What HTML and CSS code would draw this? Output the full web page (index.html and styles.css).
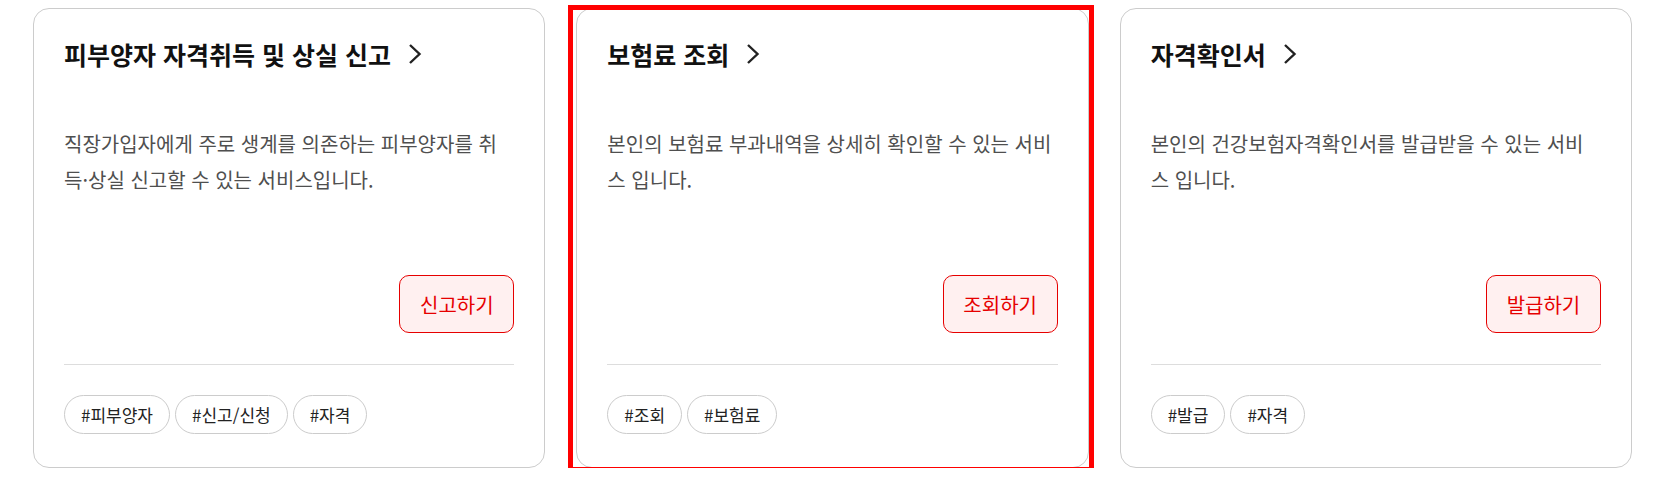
FILE: index.html
```html
<!DOCTYPE html>
<html lang="ko">
<head>
    <meta charset="UTF-8">
    <meta name="viewport" content="width=device-width, initial-scale=1.0">
    <title>자주 찾는 서비스</title>
    <link rel="stylesheet" href="styles.css">
</head>
<body>
    <div class="service-list">
        <div class="service-card">
            <h3 class="service-title">피부양자 자격취득 및 상실 신고
                <svg class="chevron" width="14" height="22" viewBox="0 0 14 22"><polyline points="2,2 11.5,11 2,20" /></svg>
            </h3>
            <p class="service-desc">직장가입자에게 주로 생계를 의존하는 피부양자를 취득·상실 신고할 수 있는 서비스입니다.</p>
            <div class="service-action">
                <button class="action-btn">신고하기</button>
            </div>
            <ul class="tag-list">
                <li>#피부양자</li>
                <li>#신고/신청</li>
                <li>#자격</li>
            </ul>
        </div>

        <div class="service-card selected">
            <h3 class="service-title">보험료 조회
                <svg class="chevron" width="14" height="22" viewBox="0 0 14 22"><polyline points="2,2 11.5,11 2,20" /></svg>
            </h3>
            <p class="service-desc">본인의 보험료 부과내역을 상세히 확인할 수 있는 서비스 입니다.</p>
            <div class="service-action">
                <button class="action-btn">조회하기</button>
            </div>
            <ul class="tag-list">
                <li>#조회</li>
                <li>#보험료</li>
            </ul>
        </div>

        <div class="service-card">
            <h3 class="service-title">자격확인서
                <svg class="chevron" width="14" height="22" viewBox="0 0 14 22"><polyline points="2,2 11.5,11 2,20" /></svg>
            </h3>
            <p class="service-desc">본인의 건강보험자격확인서를 발급받을 수 있는 서비스 입니다.</p>
            <div class="service-action">
                <button class="action-btn">발급하기</button>
            </div>
            <ul class="tag-list">
                <li>#발급</li>
                <li>#자격</li>
            </ul>
        </div>
    </div>
</body>
</html>
```

FILE: styles.css
```css
body {
    font-family: "Noto Sans CJK KR", "Noto Sans", sans-serif;
    margin: 0;
    padding: 8px 30px 0 33px;
    background-color: #fff;
    color: #222;
}

.service-list {
    display: grid;
    grid-template-columns: repeat(3, 1fr);
    gap: 31px;
}

.service-card {
    position: relative;
    padding: 29px 30px 33px;
    border: 1px solid #ccc;
    border-radius: 16px;
    background-color: #fff;
}

/* highlight box around the selected card */
.service-card.selected::after {
    content: "";
    position: absolute;
    top: -4px;
    left: -9px;
    right: -6px;
    bottom: -5px;
    border: 5px solid #f00;
    pointer-events: none;
}

.service-title {
    display: flex;
    align-items: center;
    gap: 17px;
    margin: 0;
    height: 32px;
    font-size: 25px;
    font-weight: 700;
    color: #111;
}

.chevron {
    fill: none;
    stroke: #222;
    stroke-width: 2.4;
}

.service-desc {
    margin: 56px 0 0;
    font-size: 20px;
    line-height: 36px;
    color: #4f4f4f;
    word-break: break-all;
}

.service-action {
    display: flex;
    justify-content: flex-end;
    margin-top: 77px;
}

.action-btn {
    width: 115px;
    height: 58px;
    padding: 0;
    font-family: inherit;
    font-size: 20px;
    color: #e60000;
    background-color: #fff0f0;
    border: 1px solid #e60000;
    border-radius: 10px;
    cursor: pointer;
}

.tag-list {
    display: flex;
    gap: 5px;
    list-style-type: none;
    margin: 31px 0 0;
    padding: 30px 0 0;
    border-top: 1px solid #ddd;
}

.tag-list li {
    height: 37px;
    line-height: 37px;
    padding: 0 16px;
    font-size: 17px;
    color: #222;
    border: 1px solid #ccc;
    border-radius: 20px;
}
```
